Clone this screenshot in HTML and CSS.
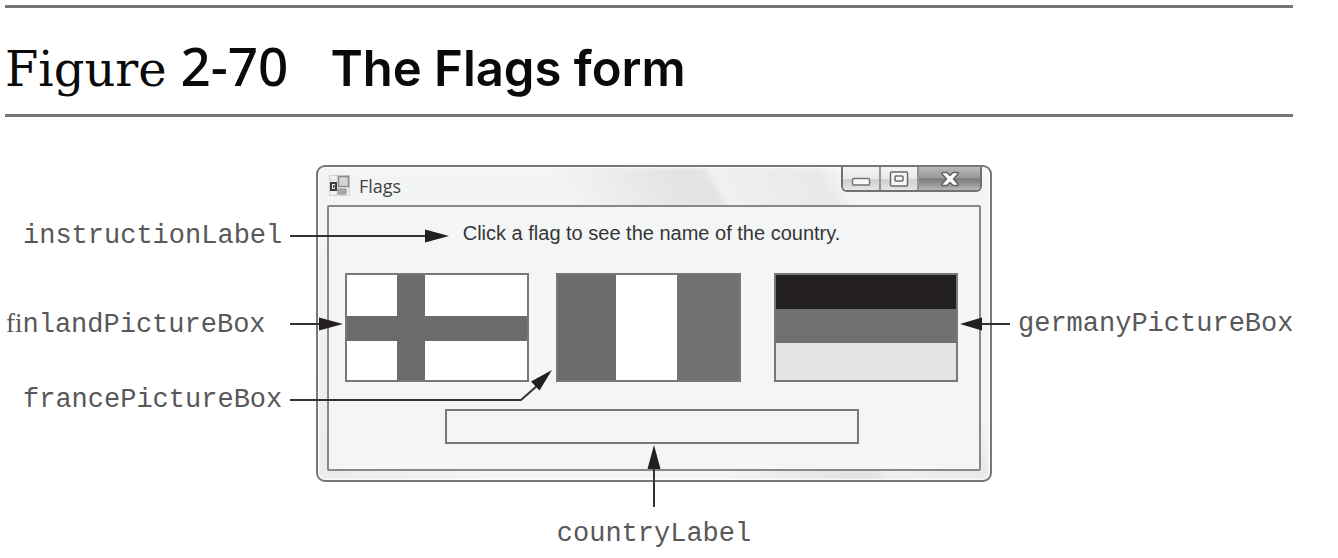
FILE: index.html
```html
<!DOCTYPE html>
<html lang="en">
<head>
<meta charset="utf-8">
<title>Figure 2-70 The Flags form</title>
<link rel="stylesheet" href="styles.css">
</head>
<body>
<figure class="figure">
  <figcaption class="caption">
    <span class="caption-number"><span class="caption-word">Figure</span> 2-70</span>
    <span class="caption-title">The Flags form</span>
  </figcaption>

  <div class="diagram">
    <div class="callouts callouts-left">
      <div class="callout callout-instruction">
        <code class="name">instructionLabel</code>
        <svg class="arrow" width="160" height="30" viewBox="0 0 160 30" aria-hidden="true">
          <path class="line" d="M0 15H137"/><path class="head" d="M135 8.500L159 15L135 21.500Z"/>
        </svg>
      </div>
      <div class="callout callout-finland">
        <code class="name"><span class="ligature">fi</span>nlandPictureBox</code>
        <svg class="arrow" width="55" height="30" viewBox="0 0 55 30" aria-hidden="true">
          <path class="line" d="M0 15H32"/><path class="head" d="M29 8.500L53 15L29 21.500Z"/>
        </svg>
      </div>
      <div class="callout callout-france">
        <code class="name">francePictureBox</code>
        <svg class="arrow" width="264" height="30" viewBox="0 0 264 30" aria-hidden="true">
          <path class="line" d="M0 15H231L248 0"/><path class="head" d="M262 -15L241 -3.500L249.500 5.500Z"/>
        </svg>
      </div>
    </div>

    <section class="window" aria-label="Flags">
      <header class="titlebar">
        <svg class="app-icon" width="22" height="22" viewBox="0 0 22 22" aria-hidden="true">
          <rect x=".5" y=".5" width="20" height="20" fill="#f0f0f0" stroke="#cfd0d1"/>
          <path d="M8 1V20M1 5H8M1 15H20" stroke="#d8d9da" fill="none"/>
          <rect x="9.500" y="1.500" width="10" height="10" fill="#d4d5d6" stroke="#8b8c8e" stroke-width="1.500"/>
          <rect x="2" y="8" width="5" height="7" fill="#eee" stroke="#3d3d3f" stroke-width="2"/>
          <rect x="4" y="10" width="1.500" height="3" fill="#444"/>
          <rect x="9" y="14" width="8" height="5" fill="#a9aaab" stroke="#939496"/>
        </svg>
        <h1 class="window-title">Flags</h1>
        <div class="window-buttons">
          <button class="window-button" type="button" aria-label="Minimize">
            <svg width="20" height="10" viewBox="0 0 20 10"><rect x="1.500" y="1.500" width="17" height="6.500" rx="1" fill="#f8f8f8" stroke="#737476" stroke-width="1.500"/></svg>
          </button>
          <button class="window-button" type="button" aria-label="Maximize">
            <svg width="20" height="16" viewBox="0 0 20 16"><rect x="1.500" y="1" width="17" height="14" rx="1" fill="#f8f8f8" stroke="#68696b" stroke-width="1.500"/><rect x="6" y="5" width="8" height="5" rx="1" fill="#f8f8f8" stroke="#68696b" stroke-width="1.500"/></svg>
          </button>
          <button class="window-button window-close" type="button" aria-label="Close">
            <svg width="20" height="18" viewBox="0 0 20 18"><path d="M2 2.500H7L10 5.500L13 2.500H18V4L13.500 9L18 14V15.500H13L10 12.500L7 15.500H2V14L6.500 9L2 4Z" fill="#fff" stroke="#626365" stroke-width="1.500" stroke-linejoin="round"/></svg>
          </button>
        </div>
      </header>
      <div class="client">
        <p class="instruction">Click a flag to see the name of the country.</p>
        <div class="flags">
          <button class="flag flag-finland" type="button" aria-label="Finland"></button>
          <button class="flag flag-france" type="button" aria-label="France"></button>
          <button class="flag flag-germany" type="button" aria-label="Germany"></button>
        </div>
        <output class="country"></output>
      </div>
    </section>

    <div class="callouts callouts-right">
      <div class="callout">
        <svg class="arrow" width="51" height="30" viewBox="0 0 51 30" aria-hidden="true">
          <path class="line" d="M20 15H50"/><path class="head" d="M0 15L22 8.500V21.500Z"/>
        </svg>
        <code class="name">germanyPictureBox</code>
      </div>
    </div>

    <div class="callout-country">
      <svg class="arrow" width="14" height="63" viewBox="0 0 14 63" aria-hidden="true">
        <path class="line" d="M7 20V62"/><path class="head" d="M7 0L.5 24H13.500Z"/>
      </svg>
      <code class="name">countryLabel</code>
    </div>
  </div>
</figure>
</body>
</html>
```
FILE: styles.css
```css
* {
  box-sizing: border-box;
}

body {
  margin: 0;
  background: #fff;
  color: #0a0a0a;
}

.figure {
  margin: 0;
  padding: 5px 45px 0 5px;
}

.caption {
  display: flex;
  align-items: baseline;
  gap: 42px;
  padding: 24px 0 11px;
  border-top: 3px solid #747474;
  border-bottom: 3px solid #747474;
  line-height: 68px;
  white-space: nowrap;
}

.caption-number {
  font-family: "Noto Sans", "Open Sans", sans-serif;
  font-size: 53px;
  font-weight: 500;
}

.caption-word {
  font-family: "DejaVu Serif", serif;
  font-size: 48px;
  font-weight: 400;
}

.caption-title {
  font-family: Inter, sans-serif;
  font-size: 49px;
  font-weight: 600;
}

.diagram {
  display: grid;
  grid-template-columns: 311px minmax(0, 1fr) 301px;
  padding-top: 48px;
}

/* Callouts */

.callouts {
  position: relative;
  z-index: 1;
  pointer-events: none;
}

.callouts-left {
  padding-top: 56px;
}

.callouts-right {
  padding-top: 144px;
  margin-left: -32px;
}

.callout {
  display: flex;
  align-items: center;
  height: 30px;
}

.name {
  color: #58585a;
  font-family: "Liberation Mono", "Courier New", monospace;
  font-size: 27px;
  line-height: 30px;
  white-space: nowrap;
}

.ligature {
  font-family: "Liberation Serif", serif;
}

.callouts-left .name {
  flex: 0 0 285px;
  padding-left: 18px;
}

.callouts-left .callout-finland .name {
  padding-left: 1px;
}

.callouts-right .name {
  padding-left: 7px;
}

.callout-finland {
  margin-top: 58px;
}

.callout-france {
  margin-top: 46px;
}

.callout-country {
  position: relative;
  z-index: 1;
  grid-column: 2;
  display: flex;
  flex-direction: column;
  align-items: center;
  gap: 11px;
  margin-top: -37px;
  pointer-events: none;
}

.arrow {
  flex: none;
  overflow: visible;
}

.line {
  fill: none;
  stroke: #333234;
  stroke-width: 2;
}

.head {
  fill: #231f20;
}

/* Window */

.window {
  padding: 0 9px 9px;
  border: 2px solid #77787a;
  border-radius: 9px;
  background: linear-gradient(60deg, #eaebec 0%, #f3f4f4 20%, #f3f4f4 48%, #e3e4e6 62%, #e3e4e6 66%, #eff0f0 67%, #e8e9ea 79%, #f3f4f4 82%);
  box-shadow: inset 0 0 2px 1px #fff;
}

.titlebar {
  display: flex;
  height: 38px;
}

.app-icon {
  margin: 8px 8px 0 2px;
}

.window-title {
  margin: 6px 0 0;
  color: #414143;
  font: 400 18px/26px "Open Sans", sans-serif;
}

.window-buttons {
  display: flex;
  height: 25px;
  margin-left: auto;
  margin-right: -1px;
  border: 2px solid #707173;
  border-top: 0;
  border-radius: 0 0 6px 6px;
  overflow: hidden;
}

.window-button {
  display: flex;
  align-items: center;
  justify-content: center;
  width: 38px;
  padding: 0;
  border: 0;
  border-right: 2px solid #929395;
  background: linear-gradient(#f3f4f4 0%, #e9eaeb 50%, #cfd0d2 55%, #e4e5e6 100%);
}

.window-button:first-child {
  align-items: end;
  padding-bottom: 3px;
}

.window-close {
  width: 61px;
  border-right: 0;
  background: linear-gradient(#b9babc 0%, #97989a 48%, #77787a 52%, #b5b6b8 100%);
}

.client {
  display: flex;
  flex-direction: column;
  align-items: center;
  padding: 14px 21px 25px 16px;
  border: 2px solid #87888a;
  border-radius: 2px;
  background: #f4f6f6;
}

.instruction {
  margin: 0 0 28px;
  color: #353537;
  font: 20px/24px "Liberation Sans", Arial, sans-serif;
}

.flags {
  display: flex;
  gap: 27px;
  width: 100%;
}

.flag {
  flex: 1;
  height: 109px;
  padding: 0;
  border: 2px solid #77787a;
  border-radius: 0;
}

.flag-finland {
  background:
    linear-gradient(90deg, transparent 50px, #6a6b6d 50px 78px, transparent 78px),
    linear-gradient(transparent 41px, #6a6b6d 41px 66px, transparent 66px),
    #fff;
}

.flag-france {
  background: linear-gradient(90deg, #6b6c6e 32%, #fff 32% 66%, #707173 66%);
}

.flag-germany {
  margin-left: 6px;
  background: linear-gradient(#231f20 32%, #6f7072 32% 65%, #e2e3e5 65%);
}

.country {
  width: 414px;
  max-width: 100%;
  height: 35px;
  margin-top: 27px;
  border: 2px solid #77787a;
}
```
